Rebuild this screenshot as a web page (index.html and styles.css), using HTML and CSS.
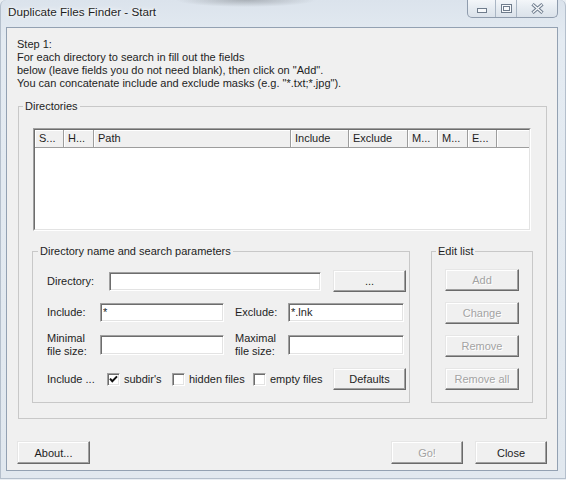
FILE: index.html
```html
<!DOCTYPE html>
<html lang="en">
<head>
<meta charset="utf-8">
<title>Duplicate Files Finder - Start</title>
<link rel="stylesheet" href="styles.css">
</head>
<body>
<div class="window">
  <div class="titlebar">
    <span class="title">Duplicate Files Finder - Start</span>
    <div class="caption">
      <span class="cap cap-min">
        <svg width="10" height="5" viewBox="0 0 10 5"><rect x="0.5" y="0.5" width="9" height="4" fill="#f7f9fb" stroke="#6f7c8c"/></svg>
      </span>
      <span class="cap cap-max">
        <svg width="11" height="9" viewBox="0 0 11 9"><rect x="0.5" y="0.5" width="10" height="8" fill="#f7f9fb" stroke="#6f7c8c"/><rect x="2.5" y="2.5" width="6" height="4" fill="#f7f9fb" stroke="#6f7c8c"/></svg>
      </span>
      <span class="cap cap-close">
        <svg width="13" height="11" viewBox="0 0 13 11"><path d="M1.5 1.2 L11.5 9.8 M11.5 1.2 L1.5 9.8" stroke="#738091" stroke-width="3.4" fill="none"/><path d="M1.9 1.6 L11.1 9.4 M11.1 1.6 L1.9 9.4" stroke="#f7f9fb" stroke-width="1.3" fill="none"/></svg>
      </span>
    </div>
  </div>
  <div class="client">
    <div class="intro">
      Step 1:<br>
      For each directory to search in fill out the fields<br>
      below (leave fields you do not need blank), then click on "Add".<br>
      You can concatenate include and exclude masks (e.g. "*.txt;*.jpg").
    </div>

    <fieldset class="group dirs">
      <legend>Directories</legend>
      <div class="dirs-body">
        <div class="listview">
          <div class="lv-inner">
            <div class="lv-header">
              <span class="lv-col c-s">S...</span>
              <span class="lv-col c-h">H...</span>
              <span class="lv-col c-path">Path</span>
              <span class="lv-col c-inc">Include</span>
              <span class="lv-col c-exc">Exclude</span>
              <span class="lv-col c-m">M...</span>
              <span class="lv-col c-m">M...</span>
              <span class="lv-col c-e">E...</span>
              <span class="lv-fill"></span>
            </div>
          </div>
        </div>

        <div class="lower">
          <fieldset class="group params">
            <legend>Directory name and search parameters</legend>
            <div class="params-body">
              <div class="row row-dir">
                <span class="lbl lbl-dir">Directory:</span>
                <input class="field f-dir" type="text" value="">
                <button class="btn btn-browse">...</button>
              </div>
              <div class="row row-mask">
                <span class="lbl lbl-a">Include:</span>
                <input class="field f-a" type="text" value="*">
                <span class="lbl lbl-b">Exclude:</span>
                <input class="field f-b" type="text" value="*.lnk">
              </div>
              <div class="row row-size">
                <span class="lbl lbl-a two">Minimal<br>file size:</span>
                <input class="field f-a tall" type="text" value="">
                <span class="lbl lbl-b two">Maximal<br>file size:</span>
                <input class="field f-b tall" type="text" value="">
              </div>
              <div class="row row-opts">
                <span class="lbl lbl-opt">Include ...</span>
                <span class="check ck-1">
                  <span class="cbox"><svg width="11" height="11" viewBox="0 0 11 11"><path d="M2 4.6 L4.3 7.2 L9 2.4" stroke="#111" stroke-width="2" fill="none"/></svg></span>
                  <span>subdir's</span>
                </span>
                <span class="check ck-2">
                  <span class="cbox"></span>
                  <span>hidden files</span>
                </span>
                <span class="check ck-3">
                  <span class="cbox"></span>
                  <span>empty files</span>
                </span>
                <button class="btn btn-defaults">Defaults</button>
              </div>
            </div>
          </fieldset>

          <fieldset class="group edit">
            <legend>Edit list</legend>
            <div class="edit-body">
              <button class="btn btn-edit" disabled>Add</button>
              <button class="btn btn-edit" disabled>Change</button>
              <button class="btn btn-edit" disabled>Remove</button>
              <button class="btn btn-edit" disabled>Remove all</button>
            </div>
          </fieldset>
        </div>
      </div>
    </fieldset>

    <div class="bottom">
      <button class="btn btn-about">About...</button>
      <button class="btn btn-go" disabled>Go!</button>
      <button class="btn btn-close">Close</button>
    </div>
  </div>
</div>
</body>
</html>
```

FILE: styles.css
```css
* { box-sizing: border-box; }

html, body {
  margin: 0;
  padding: 0;
}

body {
  width: 566px;
  height: 480px;
  overflow: hidden;
  background: #e9eef3;
  font-family: "Liberation Sans", Arial, sans-serif;
  font-size: 11px;
  color: #1e1e1e;
}

.window {
  width: 566px;
  height: 479px;
  padding: 0 7px 7px 5px;
  border-left: 1px solid #b4bfcc;
  border-right: 1px solid #b4bfcc;
  border-bottom: 1px solid #b4bfcc;
  border-radius: 6px 6px 0 0;
  background:
    radial-gradient(ellipse 70px 7px at 245px 0, rgba(110, 115, 120, 0.45), rgba(110, 115, 120, 0)),
    linear-gradient(#dbe3ec, #e4ebf2 40px, #e1e8ef);
  display: flex;
  flex-direction: column;
}

/* ---------- title bar ---------- */
.titlebar {
  height: 27px;
  display: flex;
  align-items: flex-start;
  flex: none;
}

.title {
  margin: 5px 0 0 2px;
  font-size: 11.7px;
  line-height: 14px;
  color: #1f1f1f;
  text-shadow: 0 0 6px #fff, 0 0 3px #fff;
}

.caption {
  margin-left: auto;
  display: flex;
  height: 18px;
  border: 1px solid #8f9cad;
  border-top: 0;
  border-radius: 0 0 5px 5px;
  overflow: hidden;
  background: linear-gradient(#f3f6f9, #e4eaf0 55%, #dbe2ea);
}

.cap {
  display: flex;
  align-items: center;
  justify-content: center;
  height: 17px;
}

.cap svg { display: block; }

.cap-min {
  width: 27px;
  align-items: flex-end;
  padding-bottom: 4px;
}

.cap-max {
  width: 21px;
  border-left: 1px solid #aab6c4;
}

.cap-close {
  width: 41px;
  border-left: 1px solid #aab6c4;
}

/* ---------- client area ---------- */
.client {
  flex: 1;
  border: 1px solid #93a1b2;
  background: #f0f0f0;
  display: flex;
  flex-direction: column;
}

.intro {
  padding: 10px 0 0 10px;
  line-height: 13px;
}

fieldset.group {
  margin: 0;
  padding: 0;
  min-width: 0;
  border: 1px solid #c8c8c8;
}

fieldset.group legend {
  padding: 0 2px;
  line-height: 13px;
  color: #1e1e1e;
}

fieldset.group.dirs {
  margin: 10px 10px 0 11px;
}

fieldset.group.dirs > legend { margin-left: 4px; }

.dirs-body {
  padding: 15px 14px 15px 13px;
}

/* ---------- list view ---------- */
.listview {
  margin: 0 1px;
  height: 103px;
  border: 1px solid;
  border-color: #a0a0a0 #ffffff #ffffff #a0a0a0;
}

.lv-inner {
  height: 100%;
  border: 1px solid;
  border-color: #6d6d6d #e3e3e3 #e3e3e3 #6d6d6d;
  background: #fff;
}

.lv-header {
  display: flex;
  height: 18px;
  background: #f0f0f0;
  border-bottom: 1px solid #9d9d9d;
}

.lv-col {
  flex: none;
  height: 17px;
  padding-left: 4px;
  line-height: 17px;
  white-space: nowrap;
  overflow: hidden;
  border-right: 1px solid #9d9d9d;
  box-shadow: inset 1px 1px 0 #ffffff;
}

.c-s { width: 29px; }
.c-h { width: 30px; }
.c-path { width: 197px; }
.c-inc { width: 58px; }
.c-exc { width: 59px; }
.c-m { width: 30px; }
.c-e { width: 29px; }

.lv-fill {
  flex: 1;
  box-shadow: inset 1px 1px 0 #ffffff;
}

/* ---------- lower group boxes ---------- */
.lower {
  display: flex;
  gap: 21px;
  margin-top: 14px;
}

fieldset.group.params { width: 378px; flex: none; }
fieldset.group.params > legend { margin-left: 5px; }

fieldset.group.edit { width: 102px; flex: none; }
fieldset.group.edit > legend { margin-left: 4px; }

.params-body {
  padding: 12px 5px 12px 14px;
  display: flex;
  flex-direction: column;
  gap: 10px;
}

.row {
  display: flex;
  align-items: center;
}

.row > * { flex: none; }

.row-dir { height: 22px; }
.row-mask { height: 20px; }
.row-size { height: 26px; }
.row-opts { height: 22px; }

.lbl { line-height: 13px; white-space: nowrap; }
.lbl-dir { width: 62px; }
.lbl-a { width: 53px; }
.lbl-b { width: 53px; margin-left: 11px; }
.lbl-opt { width: 60px; }

.field {
  font: inherit;
  color: #1e1e1e;
  height: 19px;
  padding: 0 0 0 2px;
  margin: 0;
  background: #fff;
  border: 1px solid;
  border-color: #a0a0a0 #ffffff #ffffff #a0a0a0;
  box-shadow: inset 1px 1px 0 #6d6d6d, inset -1px -1px 0 #e3e3e3;
  outline: none;
}

.field.tall { height: 20px; }

.f-dir { width: 212px; }
.f-a { width: 124px; }
.f-b { width: 116px; }

.check {
  display: flex;
  align-items: center;
  gap: 4px;
  white-space: nowrap;
}

.ck-1 { width: 65px; }
.ck-2 { width: 81px; }
.ck-3 { width: 80px; }

.cbox {
  width: 13px;
  height: 13px;
  flex: none;
  background: #fff;
  border: 1px solid;
  border-color: #a0a0a0 #ffffff #ffffff #a0a0a0;
  box-shadow: inset 1px 1px 0 #6d6d6d, inset -1px -1px 0 #e3e3e3;
  display: flex;
  align-items: center;
  justify-content: center;
}

.cbox svg { display: block; }

/* ---------- buttons ---------- */
.btn {
  font: inherit;
  color: #1e1e1e;
  background: #f0f0f0;
  margin: 0;
  padding: 0;
  flex: none;
  border: 1px solid;
  border-color: #e6e6e6 #6a6a6a #6a6a6a #e6e6e6;
  box-shadow: inset -1px -1px 0 #a0a0a0, inset 1px 1px 0 #ffffff;
  border-radius: 0;
}

.btn:disabled {
  color: #a3a3a3;
  text-shadow: 1px 1px 0 #ffffff;
}

.btn-browse { width: 73px; height: 22px; margin-left: 12px; }
.btn-defaults { width: 73px; height: 22px; }

.edit-body {
  padding: 11px 0 0 13px;
  display: flex;
  flex-direction: column;
  gap: 11px;
}

.btn-edit { width: 74px; height: 22px; }

.bottom {
  display: flex;
  gap: 12px;
  margin-top: 22px;
  padding: 0 10px;
}

.btn-about { width: 73px; height: 23px; }
.btn-go { width: 72px; height: 23px; margin-left: auto; }
.btn-close { width: 72px; height: 23px; }
```
